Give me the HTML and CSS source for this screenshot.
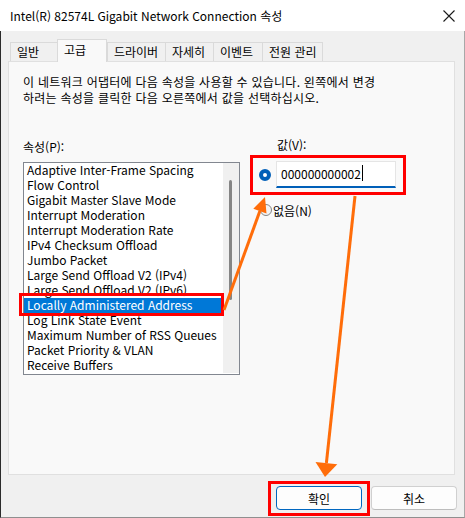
FILE: index.html
```html
<!DOCTYPE html>
<html lang="ko">
<head>
    <meta charset="UTF-8">
    <meta name="viewport" content="width=device-width, initial-scale=1.0">
    <title>Intel(R) 82574L Gigabit Network Connection 속성</title>
    <link rel="stylesheet" href="styles.css">
</head>
<body>
    <div class="titlebar">
        <span class="title">Intel(R) 82574L Gigabit Network Connection 속성</span>
        <svg class="close" width="12" height="12" viewBox="0 0 12 12">
            <path d="M0.5 0.5 L11.5 11.5 M11.5 0.5 L0.5 11.5" stroke="#1a1a1a" stroke-width="1.1" fill="none"/>
        </svg>
    </div>

    <div class="dialog">
        <div class="tabs">
            <div class="tab">일반</div>
            <div class="tab active">고급</div>
            <div class="tab">드라이버</div>
            <div class="tab">자세히</div>
            <div class="tab">이벤트</div>
            <div class="tab">전원 관리</div>
        </div>

        <div class="panel">
            <p class="desc">이 네트워크 어댑터에 다음 속성을 사용할 수 있습니다. 왼쪽에서 변경<br>하려는 속성을 클릭한 다음 오른쪽에서 값을 선택하십시오.</p>

            <div class="columns">
                <div class="props">
                    <div class="label">속성(P):</div>
                    <div class="listbox">
                        <ul class="items">
                            <li>Adaptive Inter-Frame Spacing</li>
                            <li>Flow Control</li>
                            <li>Gigabit Master Slave Mode</li>
                            <li>Interrupt Moderation</li>
                            <li>Interrupt Moderation Rate</li>
                            <li>IPv4 Checksum Offload</li>
                            <li>Jumbo Packet</li>
                            <li>Large Send Offload V2 (IPv4)</li>
                            <li>Large Send Offload V2 (IPv6)</li>
                            <li class="selected">Locally Administered Address</li>
                            <li>Log Link State Event</li>
                            <li>Maximum Number of RSS Queues</li>
                            <li>Packet Priority &amp; VLAN</li>
                            <li>Receive Buffers</li>
                        </ul>
                        <div class="scrollbar"><div class="thumb"></div></div>
                    </div>
                </div>

                <div class="value">
                    <div class="label value-label">값(V):</div>
                    <div class="value-box">
                        <span class="radio checked"></span>
                        <div class="textbox"><span>000000000002</span><span class="caret"></span></div>
                    </div>
                    <div class="radio-row">
                        <span class="radio"></span>
                        <span>없음(N)</span>
                    </div>
                </div>
            </div>
        </div>

        <div class="buttons">
            <button class="btn default">확인</button>
            <button class="btn">취소</button>
        </div>
    </div>

    <!-- annotation arrows -->
    <svg class="arrows" width="465" height="518" viewBox="0 0 465 518">
        <line x1="224" y1="310" x2="259.9" y2="211" stroke="#ff6d0a" stroke-width="3"/>
        <polygon points="265,197 266.5,213.5 253.3,208.7" fill="#ff6d0a"/>
        <line x1="355" y1="196" x2="326.4" y2="463" stroke="#ff6d0a" stroke-width="3"/>
        <polygon points="325,477 337.3,464.3 315.5,461.9" fill="#ff6d0a"/>
    </svg>
</body>
</html>
```

FILE: styles.css
```css
body {
    margin: 0;
    width: 465px;
    height: 518px;
    overflow: hidden;
    position: relative;
    background-color: #f0f0f0;
    color: #000;
    font-family: "Noto Sans CJK KR", "Noto Sans", sans-serif;
    font-size: 12px;
}
.titlebar {
    height: 31px;
    background-color: #fff;
    display: flex;
    align-items: center;
    justify-content: space-between;
    padding: 0 10px;
}
.title {
    line-height: 16px;
}
.dialog {
    box-sizing: border-box;
    height: 487px;
    padding: 8px 7px 0;
    border-left: 1px solid #2b2b2b;
    border-right: 1px solid #a8a8a8;
    border-bottom: 1px solid #8f8f8f;
}
.tabs {
    display: grid;
    grid-template-columns: 47px 50px 58px 48px 49px 61px;
    align-items: end;
    height: 22px;
    margin-left: 2px;
}
.tab {
    box-sizing: border-box;
    height: 19px;
    line-height: 17px;
    padding-left: 6px;
    border: 1px solid #dadada;
    border-bottom: none;
    border-right: none;
    background-color: #f0f0f0;
    white-space: nowrap;
}
.tab:last-child {
    border-right: 1px solid #dadada;
}
.tab.active {
    height: 23px;
    margin-bottom: -1px;
    padding-top: 1px;
    border-right: 1px solid #dadada;
    background-color: #f9f9f9;
    position: relative;
    z-index: 1;
}
.panel {
    width: 447px;
    height: 414px;
    box-sizing: border-box;
    padding: 12px 14px 0;
    border: 1px solid #e0e0e0;
    background-color: #f9f9f9;
}
.desc {
    margin: 0;
    line-height: 16px;
    letter-spacing: 0.25px;
    white-space: nowrap;
}
.columns {
    display: grid;
    grid-template-columns: 217px 1fr;
    column-gap: 10px;
    align-items: start;
    margin-top: 33px;
}
.label {
    line-height: 16px;
}
.listbox {
    margin-top: 7px;
    height: 213px;
    box-sizing: border-box;
    border: 1px solid #828790;
    background-color: #fff;
    display: grid;
    grid-template-columns: 1fr 16px;
}
.items {
    list-style: none;
    margin: 0;
    padding: 0;
}
.items li {
    height: 15px;
    line-height: 14px;
    padding-left: 3px;
    white-space: nowrap;
}
.items li.selected {
    background-color: #0078d7;
    color: #fff;
    position: relative;
}
.items li.selected::after {
    content: "";
    position: absolute;
    top: -5px;
    left: -5px;
    right: -1px;
    bottom: -3px;
    border: 3px solid #f00;
}
.scrollbar {
    background-color: #f0f0f0;
    height: 210px;
}
.thumb {
    margin: 17px 0 0 6px;
    width: 3px;
    height: 120px;
    border-radius: 2px;
    background-color: #858585;
}
.value {
    margin-top: -2px;
}
.value-label {
    padding-left: 27px;
}
.value-box {
    margin-top: 2px;
    width: 156px;
    box-sizing: border-box;
    border: 3px solid #f00;
    padding: 3px 7px 4px 6px;
    display: flex;
    align-items: center;
    gap: 5px;
}
.radio {
    width: 12px;
    height: 12px;
    box-sizing: border-box;
    border-radius: 50%;
    border: 1px solid #858585;
    background-color: #f3f3f3;
    flex: none;
}
.radio.checked {
    border: 4px solid #005fb8;
    background-color: #fff;
}
.textbox {
    width: 120px;
    height: 27px;
    box-sizing: border-box;
    border: 1px solid #e5e5e5;
    border-bottom: 2px solid #005fb8;
    background-color: #fff;
    padding: 0 0 2px 4px;
    display: flex;
    align-items: center;
}
.caret {
    width: 1px;
    height: 16px;
    margin-left: 1px;
    background-color: #000;
}
.radio-row {
    margin-top: 7px;
    height: 16px;
    padding-left: 10px;
    display: flex;
    align-items: center;
    gap: 1px;
}
.buttons {
    display: flex;
    justify-content: flex-end;
    gap: 9px;
    margin-top: 11px;
}
.btn {
    width: 86px;
    height: 24px;
    border: 1px solid #d0d0d0;
    border-bottom-color: #bdbdbd;
    border-radius: 4px;
    background-color: #fdfdfd;
    font-family: inherit;
    font-size: 12px;
    color: #000;
    padding: 0;
}
.btn.default {
    border-color: #0067c0;
    position: relative;
}
.btn.default::after {
    content: "";
    position: absolute;
    top: -6px;
    left: -9px;
    right: -9px;
    bottom: -7px;
    border: 3px solid #f00;
}
.arrows {
    position: absolute;
    top: 0;
    left: 0;
    pointer-events: none;
}
```
